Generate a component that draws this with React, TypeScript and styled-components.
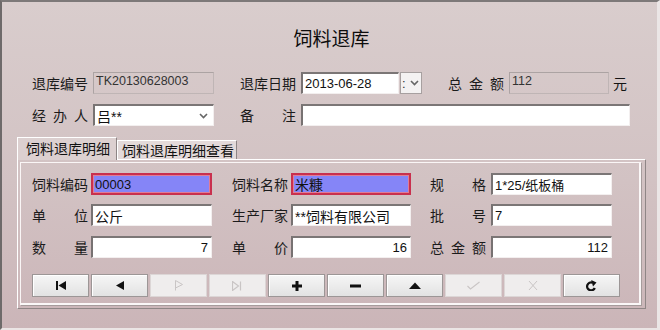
import React from "react";
import styled, { createGlobalStyle, css } from "styled-components";

const Global = createGlobalStyle`
  html, body { margin: 0; padding: 0; }
  body { font-family: "Liberation Sans", "Noto Sans CJK SC", sans-serif; }
  * { box-sizing: border-box; }
`;

const Win = styled.div`
  width: 660px;
  height: 330px;
  border-left: 2px solid #6e6a6a;
  border-top: 2px solid #7d7979;
  border-right: 3px solid #ebe6e6;
  border-bottom: 2px solid #ebe5e5;
  background: linear-gradient(180deg, #d9cdcd 0%, #d2c2c3 55%, #cbb5b8 100%);
  overflow: hidden;
  color: #141414;
`;

const Title = styled.div`
  margin-top: 24px;
  height: 24px;
  line-height: 24px;
  text-align: center;
  font-family: "Noto Sans CJK SC", sans-serif;
  font-size: 19px;
  font-weight: 400;
  padding-left: 4px;
  color: #0c0c0c;
`;

const Header = styled.div`
  margin-top: 22px;
  padding-left: 30px;
`;

const Row = styled.div<{ $mt?: number }>`
  display: flex;
  align-items: center;
  height: 22px;
  margin-top: ${(p) => p.$mt ?? 0}px;
`;

const LabelBox = styled.div<{ $ml?: number }>`
  width: 56px;
  margin-left: ${(p) => p.$ml ?? 0}px;
  display: flex;
  justify-content: space-between;
  font-family: "Noto Sans CJK SC", sans-serif;
  font-size: 14px;
  line-height: 22px;
  color: #1b1b1b;
  flex-shrink: 0;
`;

const Label = ({ text, ml }: { text: string; ml?: number }) => (
  <LabelBox $ml={ml}>
    {text.split("").map((c, i) => (
      <span key={i}>{c}</span>
    ))}
  </LabelBox>
);

const fieldBase = css<{ $w: number; $ml?: number; $right?: boolean; $cjk?: boolean }>`
  width: ${(p) => p.$w}px;
  height: 22px;
  margin-left: ${(p) => p.$ml ?? 0}px;
  flex-shrink: 0;
  display: flex;
  align-items: center;
  justify-content: ${(p) => (p.$right ? "flex-end" : "flex-start")};
  padding: 0 3px 0 2px;
  font-size: ${(p) => (p.$cjk ? 14 : 13)}px;
  font-family: "Liberation Sans", "Noto Sans CJK SC", sans-serif;
  white-space: nowrap;
  overflow: hidden;
  color: #111;
`;

const Field = styled.div<{ $w: number; $ml?: number; $right?: boolean; $cjk?: boolean; $hl?: boolean }>`
  ${fieldBase};
  background: ${(p) => (p.$hl ? "#8585f7" : "#ffffff")};
  border-style: solid;
  border-width: 2px 1px 1px 2px;
  border-color: #7b7676 #f3efef #f3efef #777272;
  ${(p) =>
    p.$hl &&
    css`
      border: 2px solid #c9304e;
      box-shadow: inset 0 0 0 1px #e07c95;
    `}
`;

const ReadBox = styled.div<{ $w: number; $ml?: number; $right?: boolean; $cjk?: boolean }>`
  ${fieldBase};
  background: transparent;
  border: 1px solid #aca3a3;
  border-right-color: #bfb5b5;
  border-bottom-color: #bfb5b5;
  color: #333;
  font-size: 12.5px;
  align-items: flex-start;
  padding-top: 1px;
`;

const Chevron = styled.svg`
  margin-left: auto;
  margin-right: 2px;
`;

const DropBtn = styled.div`
  width: 22px;
  height: 22px;
  margin-left: 1px;
  border: 1px solid #a7a0a0;
  background: #f4f2f2;
  display: flex;
  align-items: center;
  font-size: 13px;
  padding-left: 1px;
  color: #333;
`;

const Unit = styled.span`
  margin-left: 4px;
  font-family: "Noto Sans CJK SC", sans-serif;
  font-size: 14px;
`;

const TabBar = styled.div`
  margin-top: 10px;
  padding-left: 15px;
  display: flex;
  align-items: flex-end;
  height: 23px;
`;

const Tab = styled.div<{ $active?: boolean }>`
  height: ${(p) => (p.$active ? 23 : 19)}px;
  width: ${(p) => (p.$active ? 100 : 120)}px;
  padding-left: ${(p) => (p.$active ? 8 : 4)}px;
  font-family: "Noto Sans CJK SC", sans-serif;
  font-size: 14px;
  line-height: ${(p) => (p.$active ? 21 : 18)}px;
  border-left: 1px solid #ffffff;
  border-top: 1px solid #ffffff;
  border-right: 1px solid #8d8585;
  background: ${(p) => (p.$active ? "#dcd0d0" : "#e3dada")};
  color: #111;
  position: relative;
  z-index: ${(p) => (p.$active ? 2 : 1)};
  margin-bottom: ${(p) => (p.$active ? -1 : 0)}px;
`;

const Panel = styled.div`
  margin-left: 15px;
  width: 629px;
  height: 150px;
  border-left: 1px solid #ffffff;
  border-top: 1px solid #ffffff;
  border-right: 1px solid #8f8686;
  border-bottom: 1px solid #8f8686;
  padding: 2px 4px 3px 2px;
  background: transparent;
`;

const Group = styled.div`
  height: 100%;
  border-left: 1px solid #faf6f6;
  border-top: 1px solid #faf6f6;
  border-right: 2px solid #fbf8f8;
  border-bottom: 2px solid #fbf8f8;
  box-shadow: 1px 1px 0 #a69c9c;
  padding: 10px 0 0 11px;
`;

const Toolbar = styled.div`
  margin-top: 16px;
  display: grid;
  grid-template-columns: repeat(10, 57px);
  column-gap: 2px;
  height: 23px;
`;

const ToolBtn = styled.div<{ $disabled?: boolean }>`
  display: flex;
  align-items: center;
  justify-content: center;
  border: 1px solid ${(p) => (p.$disabled ? "#dcd6d6" : "#9c9696")};
  background: ${(p) =>
    p.$disabled ? "#efeded" : "linear-gradient(180deg, #f6f6f6 0%, #ececec 50%, #e2e2e2 100%)"};
  box-shadow: ${(p) => (p.$disabled ? "none" : "inset 1px 1px 0 #ffffff")};
`;

const DIS = "#c9c5c5";

const icons: { el: React.ReactNode; disabled?: boolean }[] = [
  {
    el: (
      <svg width="10" height="9" viewBox="0 0 10 9">
        <rect x="0" y="0" width="2" height="9" fill="#111" />
        <polygon points="10,0 2.5,4.5 10,9" fill="#111" />
      </svg>
    ),
  },
  {
    el: (
      <svg width="8" height="9" viewBox="0 0 8 9">
        <polygon points="8,0 0,4.5 8,9" fill="#111" />
      </svg>
    ),
  },
  {
    disabled: true,
    el: (
      <svg width="10" height="11" viewBox="0 0 10 11">
        <path d="M1.5 0.5 V10.5 M1.5 0.5 L8.5 4.5 L1.5 8" stroke={DIS} strokeWidth="1" fill="none" />
      </svg>
    ),
  },
  {
    disabled: true,
    el: (
      <svg width="11" height="10" viewBox="0 0 11 10">
        <path d="M0.5 0.5 V9.5 L6.5 5 Z M8.5 0.5 V9.5" stroke={DIS} strokeWidth="1.2" fill="none" />
      </svg>
    ),
  },
  {
    el: (
      <svg width="10" height="10" viewBox="0 0 10 10">
        <path d="M5 0 V10 M0 5 H10" stroke="#111" strokeWidth="3" />
      </svg>
    ),
  },
  {
    el: (
      <svg width="11" height="4" viewBox="0 0 11 4">
        <rect x="0" y="0.5" width="11" height="3" fill="#111" />
      </svg>
    ),
  },
  {
    el: (
      <svg width="12" height="7" viewBox="0 0 12 7">
        <polygon points="0,7 6,0.5 12,7" fill="#111" />
      </svg>
    ),
  },
  {
    disabled: true,
    el: (
      <svg width="13" height="9" viewBox="0 0 13 9">
        <path d="M0.5 5 L3.5 8 L12.5 1" stroke={DIS} strokeWidth="1.1" fill="none" />
      </svg>
    ),
  },
  {
    disabled: true,
    el: (
      <svg width="10" height="11" viewBox="0 0 10 11">
        <path d="M1 1 L9 10 M9 1 L1 10" stroke={DIS} strokeWidth="1" fill="none" />
      </svg>
    ),
  },
  {
    el: (
      <svg width="11" height="11" viewBox="0 0 11 11">
        <path d="M6.5 2.6 A4 4 0 1 0 8.8 8" stroke="#111" strokeWidth="2.3" fill="none" />
        <polygon points="5.2,0 10.5,2.6 7,6.4" fill="#111" />
      </svg>
    ),
  },
];

const SmallChevron = () => (
  <Chevron width="9" height="6" viewBox="0 0 9 6">
    <path d="M1 1 L4.5 4.5 L8 1" stroke="#666" strokeWidth="1.6" fill="none" />
  </Chevron>
);

export default function App() {
  return (
    <Win>
      <Global />
      <Title>饲料退库</Title>
      <Header>
        <Row>
          <Label text="退库编号" />
          <ReadBox $w={121} $ml={5}>TK20130628003</ReadBox>
          <Label text="退库日期" ml={26} />
          <Field $w={98} $ml={5}>2013-06-28</Field>
          <DropBtn>
            <span>:</span>
            <SmallChevron />
          </DropBtn>
          <Label text="总金额" ml={26} />
          <ReadBox $w={100} $ml={5}>112</ReadBox>
          <Unit>元</Unit>
        </Row>
        <Row $mt={10}>
          <Label text="经办人" />
          <Field $w={121} $ml={5} $cjk>
            吕**
            <SmallChevron />
          </Field>
          <Label text="备注" ml={26} />
          <Field $w={329} $ml={5} />
        </Row>
      </Header>
      <TabBar>
        <Tab $active>饲料退库明细</Tab>
        <Tab>饲料退库明细查看</Tab>
      </TabBar>
      <Panel>
        <Group>
          <Row>
            <Label text="饲料编码" />
            <Field $w={121} $ml={3} $hl>00003</Field>
            <Label text="饲料名称" ml={20} />
            <Field $w={120} $ml={3} $hl $cjk>米糠</Field>
            <Label text="规格" ml={19} />
            <Field $w={121} $ml={5}>1*25/纸板桶</Field>
          </Row>
          <Row $mt={9}>
            <Label text="单位" />
            <Field $w={121} $ml={3} $cjk>公斤</Field>
            <Label text="生产厂家" ml={20} />
            <Field $w={120} $ml={3} $cjk>**饲料有限公司</Field>
            <Label text="批号" ml={19} />
            <Field $w={121} $ml={5}>7</Field>
          </Row>
          <Row $mt={10}>
            <Label text="数量" />
            <Field $w={121} $ml={3} $right>7</Field>
            <Label text="单价" ml={20} />
            <Field $w={120} $ml={3} $right>16</Field>
            <Label text="总金额" ml={19} />
            <Field $w={121} $ml={5} $right>112</Field>
          </Row>
          <Toolbar>
            {icons.map((ic, i) => (
              <ToolBtn key={i} $disabled={ic.disabled}>
                {ic.el}
              </ToolBtn>
            ))}
          </Toolbar>
        </Group>
      </Panel>
    </Win>
  );
}
